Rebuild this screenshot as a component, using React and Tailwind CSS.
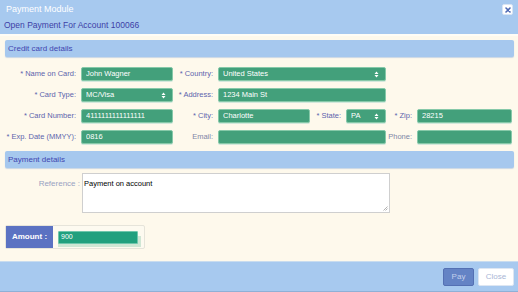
import React from "react";

const font = { fontFamily: '"Liberation Sans", Arial, sans-serif' };

function Field({ w, value, select }) {
  return (
    <div
      className={`h-[14px] ${w} bg-[#43a07b] border border-[#86c9a9] rounded-[2px] flex items-center pl-[4px] pr-[4px] text-[7.5px] text-white shadow-[0_1px_0_#d3e8dc]`}
    >
      <span className="flex-1 truncate">{value}</span>
      {select && (
        <svg width="5" height="7" viewBox="0 0 5 7" className="mr-[2px]">
          <path d="M0.5 3 L2.5 0.5 L4.5 3 Z M0.5 4 L2.5 6.5 L4.5 4 Z" fill="#ffffff" />
        </svg>
      )}
    </div>
  );
}

function Label({ w, children, gray }) {
  return (
    <div className={`${w} text-right pr-[5px] text-[7.5px] ${gray ? "text-[#7f86a6]" : "text-[#5d64ad]"}`}>
      {children}
    </div>
  );
}

function SectionBar({ children }) {
  return (
    <div className="h-[17px] bg-[#a6c8ee] rounded-[2px] flex items-center pl-[3px] text-[8px] text-[#4146b0] shadow-[0_1px_1px_#c9d6e6]">
      {children}
    </div>
  );
}

export default function App() {
  return (
    <div className="w-[518px] h-[292px] flex flex-col bg-[#fef9ec] overflow-hidden" style={font}>
      {/* Header */}
      <div className="h-[36px] bg-[#a7c9ef] flex flex-col px-[4px] border-b-[2px] border-[#fffdf6]">
        <div className="flex items-start pt-[4px] h-[20px]">
          <div className="flex-1 text-white text-[9px] pl-[2px] leading-[11px]">Payment Module</div>
          <div className="w-[11px] h-[11px] bg-white rounded-[2px] border border-[#d9e4f3] flex items-center justify-center mr-[1px]">
            <svg width="6" height="6" viewBox="0 0 6 6">
              <path d="M1 1 L5 5 M5 1 L1 5" stroke="#4d68b3" strokeWidth="1.6" strokeLinecap="round" />
            </svg>
          </div>
        </div>
        <div className="text-[8.5px] text-[#3d40a6] leading-[10px]">Open Payment For Account 100066</div>
      </div>

      {/* Body */}
      <div className="flex-1 flex flex-col pl-[5px] pr-[4px] pt-[4px]">
        <SectionBar>Credit card details</SectionBar>

        <div className="flex flex-col gap-[7px] mt-[10px]">
          <div className="flex items-center">
            <Label w="w-[76px]">* Name on Card:</Label>
            <Field w="w-[92px]" value="John Wagner" />
            <Label w="w-[45px]">* Country:</Label>
            <Field w="w-[168px]" value="United States" select />
          </div>
          <div className="flex items-center">
            <Label w="w-[76px]">* Card Type:</Label>
            <Field w="w-[92px]" value="MC/Visa" select />
            <Label w="w-[45px]">* Address:</Label>
            <Field w="w-[168px]" value="1234 Main St" />
          </div>
          <div className="flex items-center">
            <Label w="w-[76px]">* Card Number:</Label>
            <Field w="w-[92px]" value="4111111111111111" />
            <Label w="w-[45px]">* City:</Label>
            <Field w="w-[92px]" value="Charlotte" />
            <Label w="w-[36px]">* State:</Label>
            <Field w="w-[40px]" value="PA" select />
            <Label w="w-[31px]">* Zip:</Label>
            <Field w="w-[95px]" value="28215" />
          </div>
          <div className="flex items-center">
            <Label w="w-[76px]">* Exp. Date (MMYY):</Label>
            <Field w="w-[92px]" value="0816" />
            <Label w="w-[45px]" gray>Email:</Label>
            <Field w="w-[168px]" value="" />
            <Label w="w-[31px]" gray>Phone:</Label>
            <Field w="w-[95px]" value="" />
          </div>
        </div>

        <div className="mt-[7px]">
          <SectionBar>Payment details</SectionBar>
        </div>

        <div className="flex items-start mt-[5px]">
          <div className="w-[77px] text-right pr-[2px] text-[8px] text-[#98a2c2] pt-[5px]">Reference :</div>
          <div className="w-[308px] h-[40px] bg-white border border-[#cfcfcf] text-[7.5px] text-black pl-[1px] pt-[4px] relative">
            Payment on account
            <svg width="5" height="5" viewBox="0 0 5 5" className="absolute right-[1px] bottom-[1px]">
              <path d="M4.5 0.5 L0.5 4.5 M4.5 2.5 L2.5 4.5" stroke="#a0a0a0" strokeWidth="0.8" />
            </svg>
          </div>
        </div>

        <div className="mt-[12px] w-[140px] h-[24px] border border-[#e6e4da] rounded-[2px] flex items-stretch bg-[#fdfaf0]">
          <div className="w-[47px] bg-[#5b72c2] text-white text-[8px] font-bold flex items-center justify-center">Amount :</div>
          <div className="flex-1 relative">
            <div className="absolute left-[5px] right-[3px] top-[10px] bottom-[1px] bg-[#cfe6d4]" />
            <div className="absolute left-[5px] w-[80px] top-[5px] h-[13px] bg-[#21a07e] border border-[#6fc6ac] rounded-[1px] text-[7px] text-white pl-[2px] flex items-center">900</div>
          </div>
        </div>
      </div>

      {/* Footer */}
      <div className="h-[31px] bg-[#a7c9ef] border-t border-[#c9dcef] border-b border-b-[#8fb0d6] flex items-center justify-end pr-[4px] gap-[4px]">
        <div className="w-[31px] h-[18px] bg-[#6483c5] border border-[#5470b3] rounded-[2px] text-[8px] text-[#c3d0ec] flex items-center justify-center">Pay</div>
        <div className="w-[36px] h-[18px] bg-white border border-[#dde6f2] rounded-[2px] text-[8px] text-[#a9b6d6] flex items-center justify-center">Close</div>
      </div>
    </div>
  );
}
